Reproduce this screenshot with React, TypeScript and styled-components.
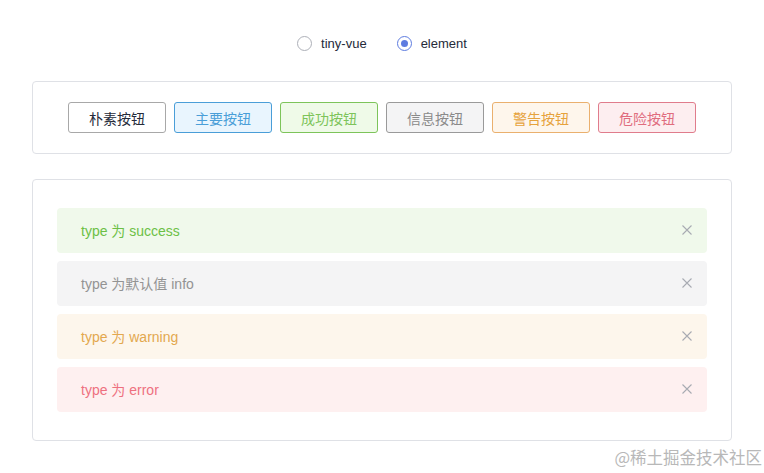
import React, { useState } from 'react';
import styled, { createGlobalStyle } from 'styled-components';

const GlobalStyle = createGlobalStyle`
  html, body {
    margin: 0;
    padding: 0;
    background: #fff;
    font-family: "Liberation Sans", "Noto Sans CJK SC", sans-serif;
  }
  * { box-sizing: border-box; }
`;

type Tone = 'plain' | 'primary' | 'success' | 'info' | 'warning' | 'danger';

const tones: Record<Tone, { bg: string; border: string; color: string }> = {
  plain: { bg: '#ffffff', border: '#a8a8a8', color: '#252b3a' },
  primary: { bg: '#e9f5fe', border: '#4a9ed8', color: '#4a9ed8' },
  success: { bg: '#effae8', border: '#7dc45a', color: '#7dc45a' },
  info: { bg: '#f4f4f5', border: '#9a9a9a', color: '#8a8a8a' },
  warning: { bg: '#fef6ec', border: '#eab06e', color: '#e6a23c' },
  danger: { bg: '#fdeef0', border: '#e07c8c', color: '#e06c7e' },
};

const alertTones: Record<string, { bg: string; color: string }> = {
  success: { bg: '#f0f9eb', color: '#6cc045' },
  info: { bg: '#f4f4f5', color: '#939393' },
  warning: { bg: '#fdf6ec', color: '#e3a84f' },
  error: { bg: '#fef0f0', color: '#ee7080' },
};

// Estilos
const Page = styled.div`
  width: 764px;
  height: 473px;
  padding: 33px 32px 0 32px;
  position: relative;
`;

const RadioGroup = styled.div`
  display: flex;
  justify-content: center;
  gap: 30px;
  height: 20px;
  align-items: center;
`;

const RadioLabel = styled.label`
  display: flex;
  align-items: center;
  gap: 9px;
  font-size: 13px;
  color: #252b3a;
  cursor: pointer;
`;

const RadioCircle = styled.span<{ $checked: boolean }>`
  width: 15px;
  height: 15px;
  border-radius: 50%;
  border: 1px solid ${p => (p.$checked ? '#5e7ce0' : '#adb0b8')};
  display: flex;
  align-items: center;
  justify-content: center;
  &::after {
    content: '';
    width: 7px;
    height: 7px;
    border-radius: 50%;
    background: #5e7ce0;
    display: ${p => (p.$checked ? 'block' : 'none')};
  }
`;

const Card = styled.div<{ $top: number }>`
  margin-top: ${p => p.$top}px;
  width: 700px;
  border: 1px solid #dfe1e6;
  border-radius: 4px;
  background: #fff;
`;

const ButtonRow = styled.div`
  display: flex;
  justify-content: center;
  gap: 8px;
  padding: 20px 0;
`;

const Button = styled.button<{ $tone: Tone }>`
  width: 98px;
  height: 31px;
  border-radius: 3px;
  font-family: "Noto Sans CJK SC", sans-serif;
  font-size: 14px;
  background: ${p => tones[p.$tone].bg};
  border: 1px solid ${p => tones[p.$tone].border};
  color: ${p => tones[p.$tone].color};
  cursor: pointer;
  padding: 0;
`;

const AlertList = styled.div`
  display: flex;
  flex-direction: column;
  gap: 8px;
  padding: 28px 24px 28px 24px;
`;

const Alert = styled.div<{ $type: string }>`
  height: 45px;
  border-radius: 4px;
  display: flex;
  align-items: center;
  justify-content: space-between;
  padding: 0 14px 2px 24px;
  background: ${p => alertTones[p.$type].bg};
  color: ${p => alertTones[p.$type].color};
  font-size: 14px;
`;

const CloseBtn = styled.span`
  width: 12px;
  height: 12px;
  display: flex;
  color: #a8abb2;
  cursor: pointer;
`;

const Watermark = styled.div`
  position: absolute;
  right: 2px;
  bottom: 4px;
  font-family: "Noto Sans CJK SC", sans-serif;
  font-size: 16.5px;
  color: #b8b8b8;
`;

const buttons: { tone: Tone; label: string }[] = [
  { tone: 'plain', label: '朴素按钮' },
  { tone: 'primary', label: '主要按钮' },
  { tone: 'success', label: '成功按钮' },
  { tone: 'info', label: '信息按钮' },
  { tone: 'warning', label: '警告按钮' },
  { tone: 'danger', label: '危险按钮' },
];

const alerts = [
  { type: 'success', text: 'type 为 success' },
  { type: 'info', text: 'type 为默认值 info' },
  { type: 'warning', text: 'type 为 warning' },
  { type: 'error', text: 'type 为 error' },
];

const App: React.FC = () => {
  const [lib, setLib] = useState('element');
  const [visible, setVisible] = useState(alerts.map(() => true));

  return (
    <Page>
      <GlobalStyle />
      <RadioGroup>
        {['tiny-vue', 'element'].map(name => (
          <RadioLabel key={name} onClick={() => setLib(name)}>
            <RadioCircle $checked={lib === name} />
            {name}
          </RadioLabel>
        ))}
      </RadioGroup>

      <Card $top={28}>
        <ButtonRow>
          {buttons.map(b => (
            <Button key={b.tone} $tone={b.tone}>{b.label}</Button>
          ))}
        </ButtonRow>
      </Card>

      <Card $top={25}>
        <AlertList>
          {alerts.map((a, i) =>
            visible[i] ? (
              <Alert key={a.type} $type={a.type}>
                <span>{a.text}</span>
                <CloseBtn onClick={() => setVisible(v => v.map((x, j) => (j === i ? false : x)))}>
                  <svg width="12" height="12" viewBox="0 0 12 12">
                    <path d="M1.5 1.5L10.5 10.5M10.5 1.5L1.5 10.5" stroke="currentColor" strokeWidth="1.1" fill="none" />
                  </svg>
                </CloseBtn>
              </Alert>
            ) : null
          )}
        </AlertList>
      </Card>

      <Watermark>@稀土掘金技术社区</Watermark>
    </Page>
  );
};

export default App;
